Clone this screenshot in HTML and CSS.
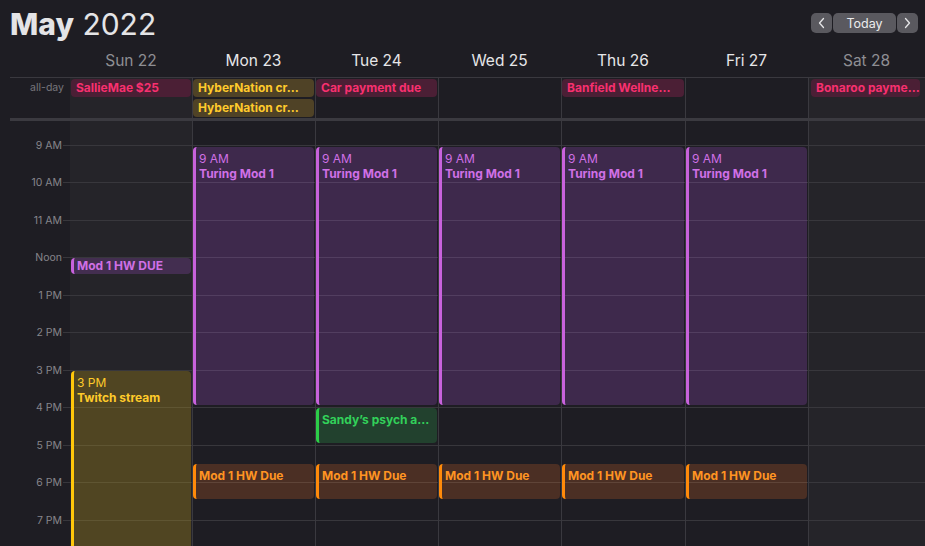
FILE: index.html
```html
<!DOCTYPE html>
<html>
<head>
<meta charset="utf-8">
<link rel="stylesheet" href="styles.css">
</head>
<body>
<div class="app">
  <header class="titlebar">
    <h1 class="title"><b>May</b> 2022</h1>
    <div class="nav">
      <button class="nav-btn arrow"><svg width="21" height="20" viewBox="0 0 21 20"><path d="M12.5 5.5 L8.5 10 L12.5 14.5" fill="none" stroke="#e6e6e8" stroke-width="1.3" stroke-linecap="round" stroke-linejoin="round"/></svg></button>
      <button class="nav-btn today">Today</button>
      <button class="nav-btn arrow"><svg width="21" height="20" viewBox="0 0 21 20"><path d="M8.5 5.5 L12.5 10 L8.5 14.5" fill="none" stroke="#e6e6e8" stroke-width="1.3" stroke-linecap="round" stroke-linejoin="round"/></svg></button>
    </div>
  </header>

  <div class="dayheads">
    <div></div>
    <div class="dayhead weekend">Sun 22</div>
    <div class="dayhead">Mon 23</div>
    <div class="dayhead">Tue 24</div>
    <div class="dayhead">Wed 25</div>
    <div class="dayhead">Thu 26</div>
    <div class="dayhead">Fri 27</div>
    <div class="dayhead weekend">Sat 28</div>
  </div>

  <div class="allday">
    <div class="allday-label">all-day</div>
    <div class="adcol first weekend-bg"><div class="chip pink">SallieMae $25</div></div>
    <div class="adcol"><div class="chip gold">HyberNation cr…</div><div class="chip gold">HyberNation cr…</div></div>
    <div class="adcol"><div class="chip pink">Car payment due</div></div>
    <div class="adcol"></div>
    <div class="adcol"><div class="chip pink">Banfield Wellne…</div></div>
    <div class="adcol"></div>
    <div class="adcol last weekend-bg"><div class="chip pink">Bonaroo payme…</div></div>
  </div>

  <div class="timed">
    <div class="hours">
      <div class="hours-spacer"></div>
      <div class="hour">9 AM</div>
      <div class="hour">10 AM</div>
      <div class="hour">11 AM</div>
      <div class="hour">Noon</div>
      <div class="hour">1 PM</div>
      <div class="hour">2 PM</div>
      <div class="hour">3 PM</div>
      <div class="hour">4 PM</div>
      <div class="hour">5 PM</div>
      <div class="hour">6 PM</div>
      <div class="hour">7 PM</div>
    </div>
    <div class="col first weekend-bg">
      <div class="ev purple short" style="top:137px;height:16px"><div class="name">Mod 1 HW DUE</div></div>
      <div class="ev yellow" style="top:250px;height:200px"><div class="time">3 PM</div><div class="name">Twitch stream</div></div>
    </div>
    <div class="col">
      <div class="ev purple" style="top:26px;height:258px"><div class="time">9 AM</div><div class="name">Turing Mod 1</div></div>
      <div class="ev orange" style="top:343px;height:35px"><div class="name">Mod 1 HW Due</div></div>
    </div>
    <div class="col">
      <div class="ev purple" style="top:26px;height:258px"><div class="time">9 AM</div><div class="name">Turing Mod 1</div></div>
      <div class="ev green" style="top:287px;height:35px"><div class="name">Sandy’s psych a…</div></div>
      <div class="ev orange" style="top:343px;height:35px"><div class="name">Mod 1 HW Due</div></div>
    </div>
    <div class="col">
      <div class="ev purple" style="top:26px;height:258px"><div class="time">9 AM</div><div class="name">Turing Mod 1</div></div>
      <div class="ev orange" style="top:343px;height:35px"><div class="name">Mod 1 HW Due</div></div>
    </div>
    <div class="col">
      <div class="ev purple" style="top:26px;height:258px"><div class="time">9 AM</div><div class="name">Turing Mod 1</div></div>
      <div class="ev orange" style="top:343px;height:35px"><div class="name">Mod 1 HW Due</div></div>
    </div>
    <div class="col">
      <div class="ev purple" style="top:26px;height:258px"><div class="time">9 AM</div><div class="name">Turing Mod 1</div></div>
      <div class="ev orange" style="top:343px;height:35px"><div class="name">Mod 1 HW Due</div></div>
    </div>
    <div class="col weekend-bg"></div>
  </div>
</div>
</body>
</html>
```
FILE: styles.css
```css
html, body {
  margin: 0;
  height: 100%;
  overflow: hidden;
  background: #1e1d23;
}
body {
  font-family: Inter, "Noto Sans", sans-serif;
  color: #e6e6e8;
}
.app {
  width: 925px;
  height: 546px;
  overflow: hidden;
}

/* title bar */
.titlebar {
  height: 48px;
  display: flex;
  justify-content: space-between;
  align-items: flex-start;
}
.title {
  margin: 0;
  padding: 9px 0 0 10px;
  font-size: 30px;
  line-height: 31px;
  font-weight: 400;
  color: #e4e4e6;
}
.title b { font-weight: 800; }
.nav {
  display: flex;
  gap: 1px;
  margin: 13px 7px 0 0;
}
.nav-btn {
  height: 20px;
  border: 0;
  padding: 0;
  background: #5a595f;
  color: #ececee;
  border-radius: 5px;
  font-family: inherit;
  font-size: 12.5px;
  display: flex;
  align-items: center;
  justify-content: center;
}
.arrow { width: 21px; }
.today { width: 63px; }

/* day headers */
.dayheads {
  display: grid;
  grid-template-columns: 70px 122px 123px 123px 123px 124px 123px 117px;
  height: 29px;
  box-sizing: border-box;
  padding-top: 5px;
}
.dayhead {
  text-align: center;
  font-size: 15.5px;
  line-height: 16px;
  color: #e6e6e8;
}
.dayhead.weekend { color: #8e8e93; }

/* all-day */
.allday {
  margin-left: 10px;
  display: grid;
  grid-template-columns: 60px 122px 123px 123px 123px 124px 123px 117px;
  height: 40px;
  border-top: 1px solid #3a393f;
  border-bottom: 3px solid #3b3a40;
}
.allday-label {
  margin-top: 1px;
  height: 18px;
  line-height: 18px;
  text-align: right;
  padding-right: 6px;
  font-size: 10.5px;
  color: #77767c;
}
.adcol {
  border-left: 1px solid #3a393f;
  display: flex;
  flex-direction: column;
  gap: 2px;
  padding: 1px 1px 0 0;
  min-width: 0;
}
.adcol.first {
  border-left: 0;
  padding-left: 1px;
}
.adcol.last {
  padding-left: 2px;
  padding-right: 5px;
}
.adcol.last .chip { padding-right: 0; }
.weekend-bg { background-color: #252429; }
.chip {
  height: 18px;
  line-height: 18px;
  border-radius: 4px;
  padding: 0 4px 0 5px;
  font-size: 12px;
  font-weight: 700;
  white-space: nowrap;
  overflow: hidden;
  text-overflow: ellipsis;
}
.chip.pink { background: #4b1f35; color: #f8306f; }
.chip.gold { background: #4f4226; color: #ffca2c; }

/* timed grid */
.timed {
  display: grid;
  grid-template-columns: 70px 122px 123px 123px 123px 124px 123px 117px;
  height: 425px;
  overflow: hidden;
}
.hours {
  background-image: linear-gradient(to bottom, #38373c 0 1px, transparent 1px 37px, #38373c 37px 38px, transparent 38px);
  background-size: 7px 75px;
  background-position: 63px 24px;
  background-repeat: repeat-y;
}
.hours-spacer { height: 5.25px; }
.hour {
  height: 37.5px;
  display: flex;
  align-items: center;
  justify-content: flex-end;
  padding-right: 8px;
  font-size: 10.5px;
  color: #86858b;
}
.col {
  position: relative;
  border-left: 1px solid #3a393f;
  background-image: linear-gradient(to bottom, #38373c 0 1px, transparent 1px 37px, #38373c 37px 38px, transparent 38px);
  background-size: 100% 75px;
  background-position: 0 24px;
  background-repeat: repeat-y;
}
.col.first { border-left: 0; }

.ev {
  position: absolute;
  left: 0;
  right: 1px;
  box-sizing: border-box;
  border-left: 3px solid;
  border-radius: 4px;
  padding: 4px 2px 0 3px;
  font-size: 12px;
  line-height: 15px;
  overflow: hidden;
}
.col.first .ev { left: 1px; }
.ev .time { font-size: 12px; }
.ev .name {
  font-weight: 700;
  white-space: nowrap;
  overflow: hidden;
  text-overflow: ellipsis;
}
.ev.short {
  padding-top: 0;
  line-height: 16px;
}
.ev.purple { background: rgba(191, 90, 242, 0.2); border-color: #c862dc; color: #d070e6; }
.ev.yellow { background: rgba(255, 204, 10, 0.2); border-color: #ffc70a; color: #ffcb2a; }
.ev.orange { background: rgba(255, 120, 40, 0.2); border-color: #ff8a0a; color: #ff9422; }
.ev.green { background: rgba(48, 209, 88, 0.2); border-color: #2ccd48; color: #32d15a; }
```
